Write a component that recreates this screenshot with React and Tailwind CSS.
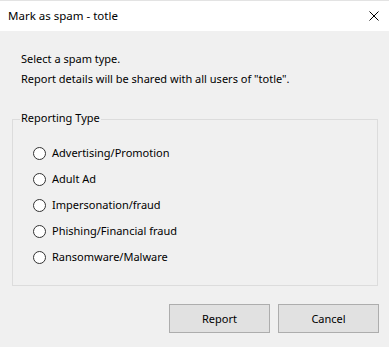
const types = [
  'Advertising/Promotion',
  'Adult Ad',
  'Impersonation/fraud',
  'Phishing/Financial fraud',
  'Ransomware/Malware',
];

export default function App() {
  return (
    <div
      className="w-[389px] h-[347px] bg-[#f0f0f0] text-black text-[11px] leading-[20px] flex flex-col"
      style={{ fontFamily: '"Noto Sans", sans-serif' }}
    >
      {/* title bar */}
      <div className="h-[31px] shrink-0 bg-white border-t border-[#e3e3e3] flex items-center justify-between pl-[8px] pr-[10px]">
        <span className="text-[11.5px]">Mark as spam - totle</span>
        <svg width="10" height="10" viewBox="0 0 10 10" className="block">
          <path d="M0.5 0.5 L9.5 9.5 M9.5 0.5 L0.5 9.5" stroke="#000" strokeWidth="1" fill="none" />
        </svg>
      </div>

      <div className="pt-[18px] pl-[21px]">
        <p>Select a spam type.</p>
        <p>Report details will be shared with all users of "totle".</p>
      </div>

      <fieldset className="mt-[19px] ml-[12px] mr-[11px] border border-[#dcdcdc] pt-[10px] pb-[15px]">
        <legend className="ml-[7px] px-[1px] pb-[2px]">Reporting Type</legend>
        {types.map((t) => (
          <label key={t} className="h-[26px] pl-[20px] flex items-center gap-[6px]">
            <span className="w-[13px] h-[13px] rounded-full border border-[#333] bg-white shrink-0" />
            <span>{t}</span>
          </label>
        ))}
      </fieldset>

      <div className="mt-[18px] pr-[10px] flex justify-end gap-[8px]">
        <button className="w-[101px] h-[29px] bg-[#e1e1e1] border border-[#adadad] leading-none">
          Report
        </button>
        <button className="w-[101px] h-[29px] bg-[#e1e1e1] border border-[#adadad] leading-none">
          Cancel
        </button>
      </div>
    </div>
  );
}
